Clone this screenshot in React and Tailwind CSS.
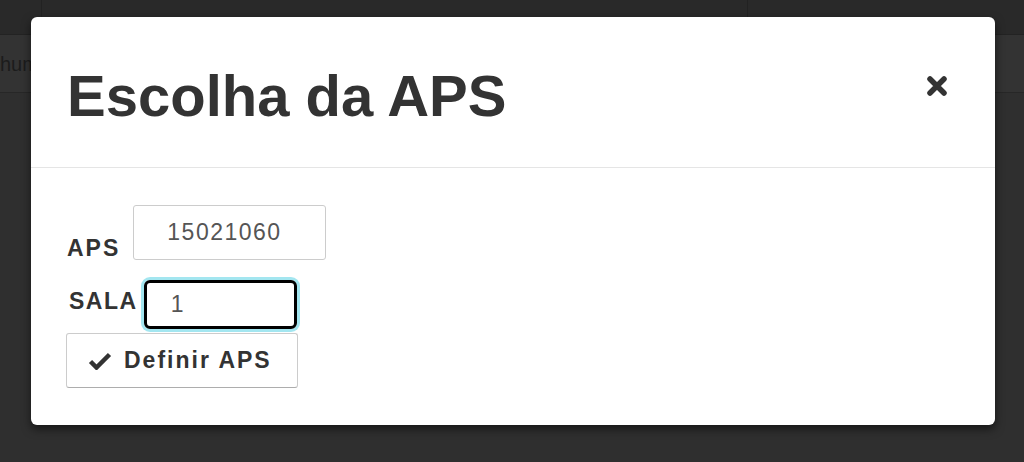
import React from 'react';


function CloseIcon() {
    return (
        <svg width="22" height="22" viewBox="0 0 22 22" className="block">
            <path d="M4 4 L18 18 M18 4 L4 18" stroke="#333" strokeWidth="5.5" strokeLinecap="round" />
        </svg>
    );
}

function CheckIcon() {
    return (
        <svg width="24" height="18" viewBox="0 0 24 18" className="block">
            <path d="M2.5 9.5 L8.5 15.5 L21.5 2.5" fill="none" stroke="#333" strokeWidth="4.5" strokeLinejoin="miter" />
        </svg>
    );
}

export default function App() {
    return (
        <div className="relative w-[1024px] h-[462px] overflow-hidden bg-[#2f2f2f] font-['Liberation_Sans',Arial,sans-serif]">
            {/* page behind the backdrop */}
            <div className="flex h-[35px] bg-[#292929] border-b border-[#232323]">
                <div className="w-[42px] border-r border-[#222]"></div>
                <div className="w-[706px] border-r border-[#222]"></div>
                <div className="flex-1"></div>
            </div>
            <div className="flex items-center h-[58px] bg-[#333] border-b border-[#272727]">
                <span className="text-[20px] text-[#1c1c1c]">hum</span>
            </div>

            <div className="absolute left-[31px] top-[17px] w-[964px] h-[408px] bg-white rounded-[6px] shadow-[0_4px_10px_rgba(0,0,0,0.55)] text-[#333]">
                <div className="flex items-start justify-between h-[151px] border-b border-[#e5e5e5] pt-[50px] pl-[36px] pr-[47px]">
                    <h1 className="text-[58px] leading-none font-bold text-[#333]">Escolha da APS</h1>
                    <button className="mt-[8px]"><CloseIcon /></button>
                </div>

                <div className="pt-[37px] pl-[36px] pb-[37px]">
                    <div className="flex items-end">
                        <label className="text-[23px] leading-none font-bold tracking-[2px]">APS</label>
                        <input
                            className="ml-[13px] w-[193px] h-[55px] border border-[#ccc] rounded-[3px] pl-[33px] text-[23px] tracking-[1.5px] text-[#555] outline-none"
                            defaultValue="15021060"
                        />
                    </div>
                    <div className="flex items-center mt-[20px] pl-[2px]">
                        <label className="mb-[6px] text-[23px] leading-none font-bold tracking-[1.5px]">SALA</label>
                        <input
                            className="ml-[6px] w-[153px] h-[49px] border-[3px] border-black rounded-[6px] pl-[24px] text-[23px] text-[#555] outline-none shadow-[0_0_0_3px_rgba(102,214,230,0.6)]"
                            defaultValue="1"
                        />
                    </div>
                    <button className="flex items-center mt-[4px] -ml-[1px] w-[232px] h-[55px] pl-[21px] bg-white border border-[#ccc] border-b-[#adadad] rounded-[3px]">
                        <CheckIcon />
                        <span className="ml-[12px] text-[23px] font-bold tracking-[2px] text-[#333]">Definir APS</span>
                    </button>
                </div>
            </div>
        </div>
    );
}
